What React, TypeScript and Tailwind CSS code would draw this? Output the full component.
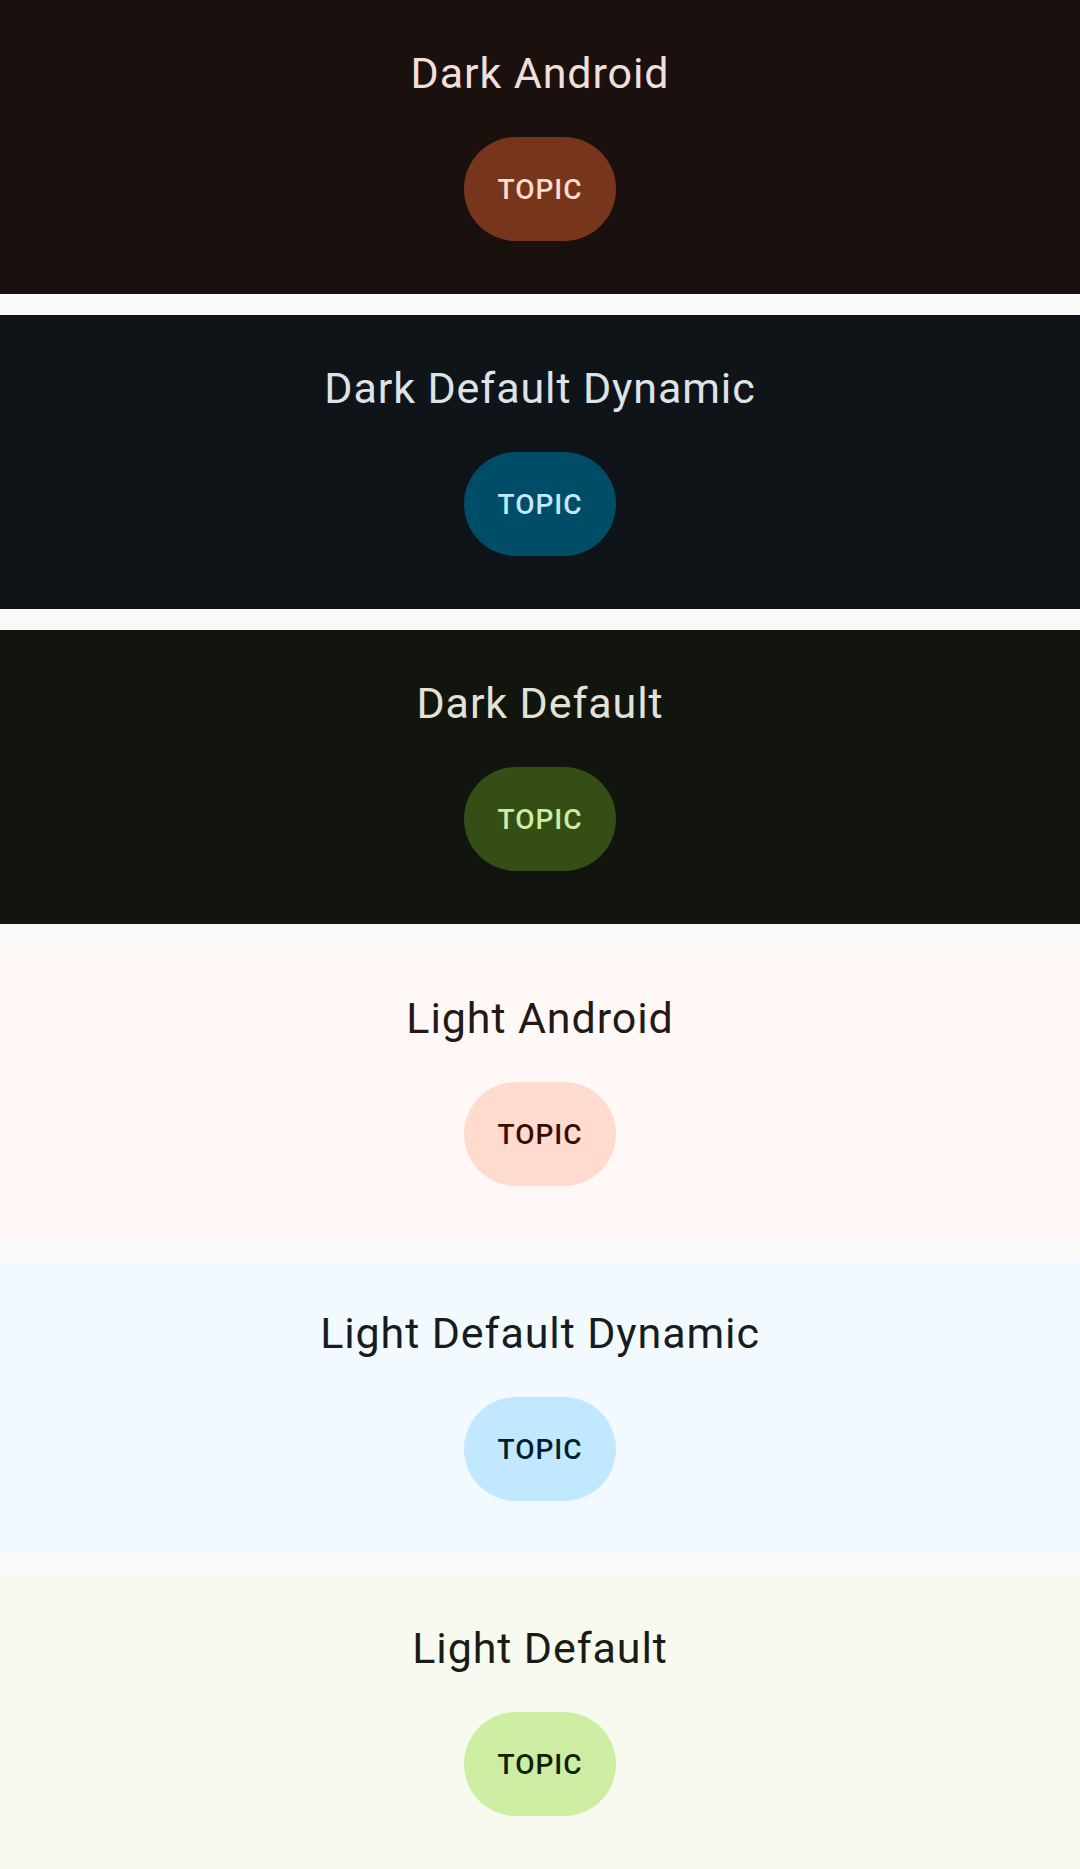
import React from 'react';

interface ThemePreview {
  name: string;
  bg: string;
  title: string;
  chip: string;
  chipText: string;
}

const themes: ThemePreview[] = [
  { name: 'Dark Android', bg: 'bg-[#1a110f]', title: 'text-[#f1dfda]', chip: 'bg-[#77361c]', chipText: 'text-[#ffdbcf]' },
  { name: 'Dark Default Dynamic', bg: 'bg-[#0f1419]', title: 'text-[#dee3e9]', chip: 'bg-[#004d67]', chipText: 'text-[#c2e8ff]' },
  { name: 'Dark Default', bg: 'bg-[#12140e]', title: 'text-[#e2e3d8]', chip: 'bg-[#354e16]', chipText: 'text-[#cdeda3]' },
  { name: 'Light Android', bg: 'bg-[#fff8f6]', title: 'text-[#231917]', chip: 'bg-[#ffdbcf]', chipText: 'text-[#380d00]' },
  { name: 'Light Default Dynamic', bg: 'bg-[#f3faff]', title: 'text-[#171c1f]', chip: 'bg-[#c2e8ff]', chipText: 'text-[#001e2c]' },
  { name: 'Light Default', bg: 'bg-[#f9faef]', title: 'text-[#1a1c16]', chip: 'bg-[#cdeda3]', chipText: 'text-[#102000]' },
];

function Preview({ theme }: { theme: ThemePreview }) {
  return (
    <div className={`${theme.bg} h-[294px] flex flex-col items-center pt-[47px]`}>
      <div className={`${theme.title} text-[43px] leading-[52px] tracking-[0.9px]`}>{theme.name}</div>
      <div className={`${theme.chip} ${theme.chipText} mt-[38px] pt-[2px] h-[104px] w-[152px] rounded-full flex items-center justify-center text-[28px] font-medium tracking-[1px]`}>
        TOPIC
      </div>
    </div>
  );
}

export default function App() {
  return (
    <div className="bg-[#f9f9f9] flex flex-col gap-[21px] w-[1080px] h-[1869px]" style={{ fontFamily: 'Roboto, "Liberation Sans", sans-serif' }}>
      {themes.map((t) => (
        <Preview key={t.name} theme={t} />
      ))}
    </div>
  );
}
